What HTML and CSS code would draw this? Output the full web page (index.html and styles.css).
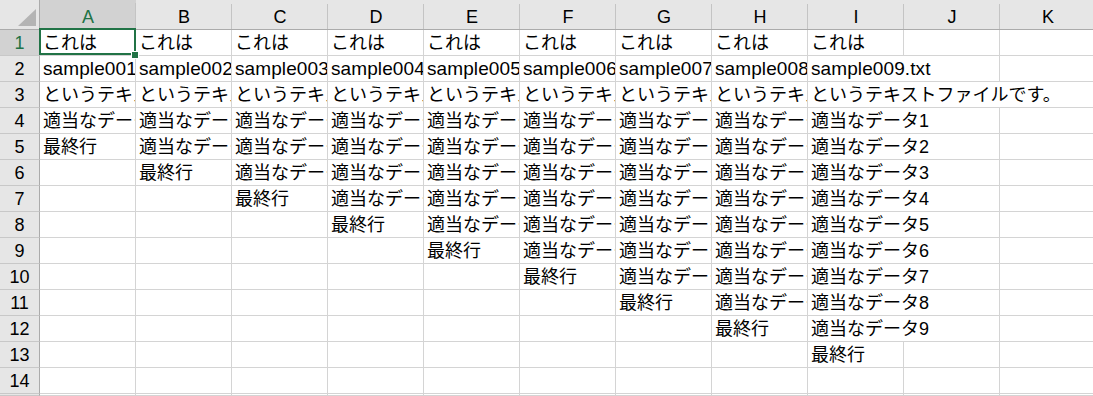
FILE: index.html
```html
<!DOCTYPE html>
<html lang="ja">
<head>
<meta charset="utf-8">
<title>Sheet</title>
<link rel="stylesheet" href="styles.css">
</head>
<body>
<div class="sheet">
  <div class="corner"><svg width="40" height="30" viewBox="0 0 40 30"><polygon points="36,9 36,26 18,26" fill="#b4b4b4"/></svg></div>
  <div class="ch sel">A</div><div class="ch">B</div><div class="ch">C</div><div class="ch">D</div><div class="ch">E</div><div class="ch">F</div><div class="ch">G</div><div class="ch">H</div><div class="ch">I</div><div class="ch">J</div><div class="ch">K</div>

  <div class="rh sel">1</div>
  <div class="c active">これは</div><div class="c">これは</div><div class="c">これは</div><div class="c">これは</div><div class="c">これは</div><div class="c">これは</div><div class="c">これは</div><div class="c">これは</div><div class="c">これは</div><div class="c"></div><div class="c"></div>

  <div class="rh">2</div>
  <div class="c lat">sample001.txt</div><div class="c lat">sample002.txt</div><div class="c lat">sample003.txt</div><div class="c lat">sample004.txt</div><div class="c lat">sample005.txt</div><div class="c lat">sample006.txt</div><div class="c lat">sample007.txt</div><div class="c lat">sample008.txt</div><div class="c lat s2">sample009.txt</div><div class="c"></div>

  <div class="rh">3</div>
  <div class="c">というテキストファイルです。</div><div class="c">というテキストファイルです。</div><div class="c">というテキストファイルです。</div><div class="c">というテキストファイルです。</div><div class="c">というテキストファイルです。</div><div class="c">というテキストファイルです。</div><div class="c">というテキストファイルです。</div><div class="c">というテキストファイルです。</div><div class="c s3">というテキストファイルです。</div>

  <div class="rh">4</div>
  <div class="c">適当なデータ1</div><div class="c">適当なデータ1</div><div class="c">適当なデータ1</div><div class="c">適当なデータ1</div><div class="c">適当なデータ1</div><div class="c">適当なデータ1</div><div class="c">適当なデータ1</div><div class="c">適当なデータ1</div><div class="c s2">適当なデータ1</div><div class="c"></div>

  <div class="rh">5</div>
  <div class="c">最終行</div><div class="c">適当なデータ2</div><div class="c">適当なデータ2</div><div class="c">適当なデータ2</div><div class="c">適当なデータ2</div><div class="c">適当なデータ2</div><div class="c">適当なデータ2</div><div class="c">適当なデータ2</div><div class="c s2">適当なデータ2</div><div class="c"></div>

  <div class="rh">6</div>
  <div class="c"></div><div class="c">最終行</div><div class="c">適当なデータ3</div><div class="c">適当なデータ3</div><div class="c">適当なデータ3</div><div class="c">適当なデータ3</div><div class="c">適当なデータ3</div><div class="c">適当なデータ3</div><div class="c s2">適当なデータ3</div><div class="c"></div>

  <div class="rh">7</div>
  <div class="c"></div><div class="c"></div><div class="c">最終行</div><div class="c">適当なデータ4</div><div class="c">適当なデータ4</div><div class="c">適当なデータ4</div><div class="c">適当なデータ4</div><div class="c">適当なデータ4</div><div class="c s2">適当なデータ4</div><div class="c"></div>

  <div class="rh">8</div>
  <div class="c"></div><div class="c"></div><div class="c"></div><div class="c">最終行</div><div class="c">適当なデータ5</div><div class="c">適当なデータ5</div><div class="c">適当なデータ5</div><div class="c">適当なデータ5</div><div class="c s2">適当なデータ5</div><div class="c"></div>

  <div class="rh">9</div>
  <div class="c"></div><div class="c"></div><div class="c"></div><div class="c"></div><div class="c">最終行</div><div class="c">適当なデータ6</div><div class="c">適当なデータ6</div><div class="c">適当なデータ6</div><div class="c s2">適当なデータ6</div><div class="c"></div>

  <div class="rh">10</div>
  <div class="c"></div><div class="c"></div><div class="c"></div><div class="c"></div><div class="c"></div><div class="c">最終行</div><div class="c">適当なデータ7</div><div class="c">適当なデータ7</div><div class="c s2">適当なデータ7</div><div class="c"></div>

  <div class="rh">11</div>
  <div class="c"></div><div class="c"></div><div class="c"></div><div class="c"></div><div class="c"></div><div class="c"></div><div class="c">最終行</div><div class="c">適当なデータ8</div><div class="c s2">適当なデータ8</div><div class="c"></div>

  <div class="rh">12</div>
  <div class="c"></div><div class="c"></div><div class="c"></div><div class="c"></div><div class="c"></div><div class="c"></div><div class="c"></div><div class="c">最終行</div><div class="c s2">適当なデータ9</div><div class="c"></div>

  <div class="rh">13</div>
  <div class="c"></div><div class="c"></div><div class="c"></div><div class="c"></div><div class="c"></div><div class="c"></div><div class="c"></div><div class="c"></div><div class="c">最終行</div><div class="c"></div><div class="c"></div>

  <div class="rh">14</div>
  <div class="c"></div><div class="c"></div><div class="c"></div><div class="c"></div><div class="c"></div><div class="c"></div><div class="c"></div><div class="c"></div><div class="c"></div><div class="c"></div><div class="c"></div>

  <div class="rh"></div>
  <div class="c"></div><div class="c"></div><div class="c"></div><div class="c"></div><div class="c"></div><div class="c"></div><div class="c"></div><div class="c"></div><div class="c"></div><div class="c"></div><div class="c"></div>
</div>
</body>
</html>
```

FILE: styles.css
```css
html, body {
  margin: 0;
  padding: 0;
  background: #ffffff;
  overflow: hidden;
}

.sheet {
  display: grid;
  grid-template-columns: 40px repeat(11, 96px);
  grid-template-rows: 30px repeat(14, 26px) 2px;
  font-family: "Liberation Sans", "Noto Sans CJK JP", sans-serif;
  font-size: 18px;
  color: #000000;
}

.corner {
  background: #e6e6e6;
  border-right: 1px solid #ababab;
  border-bottom: 1px solid #ababab;
  box-sizing: border-box;
}

.corner svg {
  display: block;
}

.ch {
  box-sizing: border-box;
  background:
    linear-gradient(#c4c4c4, #c4c4c4) right bottom / 1px 25px no-repeat,
    #e6e6e6;
  border-bottom: 1px solid #ababab;
  text-align: center;
  line-height: 30px;
  padding-top: 2px;
}

.ch.sel {
  background:
    linear-gradient(#c4c4c4, #c4c4c4) right bottom / 1px 25px no-repeat,
    #d2d2d2;
  color: #217346;
  border-bottom: 2px solid #217346;
}

.rh {
  box-sizing: border-box;
  background: #e6e6e6;
  border-right: 1px solid #ababab;
  border-bottom: 1px solid #c8c8c8;
  text-align: center;
  line-height: 26px;
  overflow: hidden;
}

.rh.sel {
  background: #d2d2d2;
  color: #217346;
}

.c {
  box-sizing: border-box;
  border-right: 1px solid #d4d4d4;
  border-bottom: 1px solid #d4d4d4;
  padding-left: 3px;
  line-height: 26px;
  white-space: nowrap;
  overflow: hidden;
}

.c.lat {
  font-size: 19px;
  letter-spacing: 0.1px;
}

.s2 { grid-column: span 2; }
.s3 { grid-column: span 3; }

.active {
  position: relative;
  overflow: visible;
}

.active::before {
  content: "";
  position: absolute;
  top: -2px;
  left: -1px;
  right: -1px;
  bottom: 0;
  border: 2px solid #217346;
  pointer-events: none;
}

.active::after {
  content: "";
  position: absolute;
  right: -4px;
  bottom: -4px;
  width: 6px;
  height: 6px;
  background: #217346;
  border: 1px solid #ffffff;
}
```
